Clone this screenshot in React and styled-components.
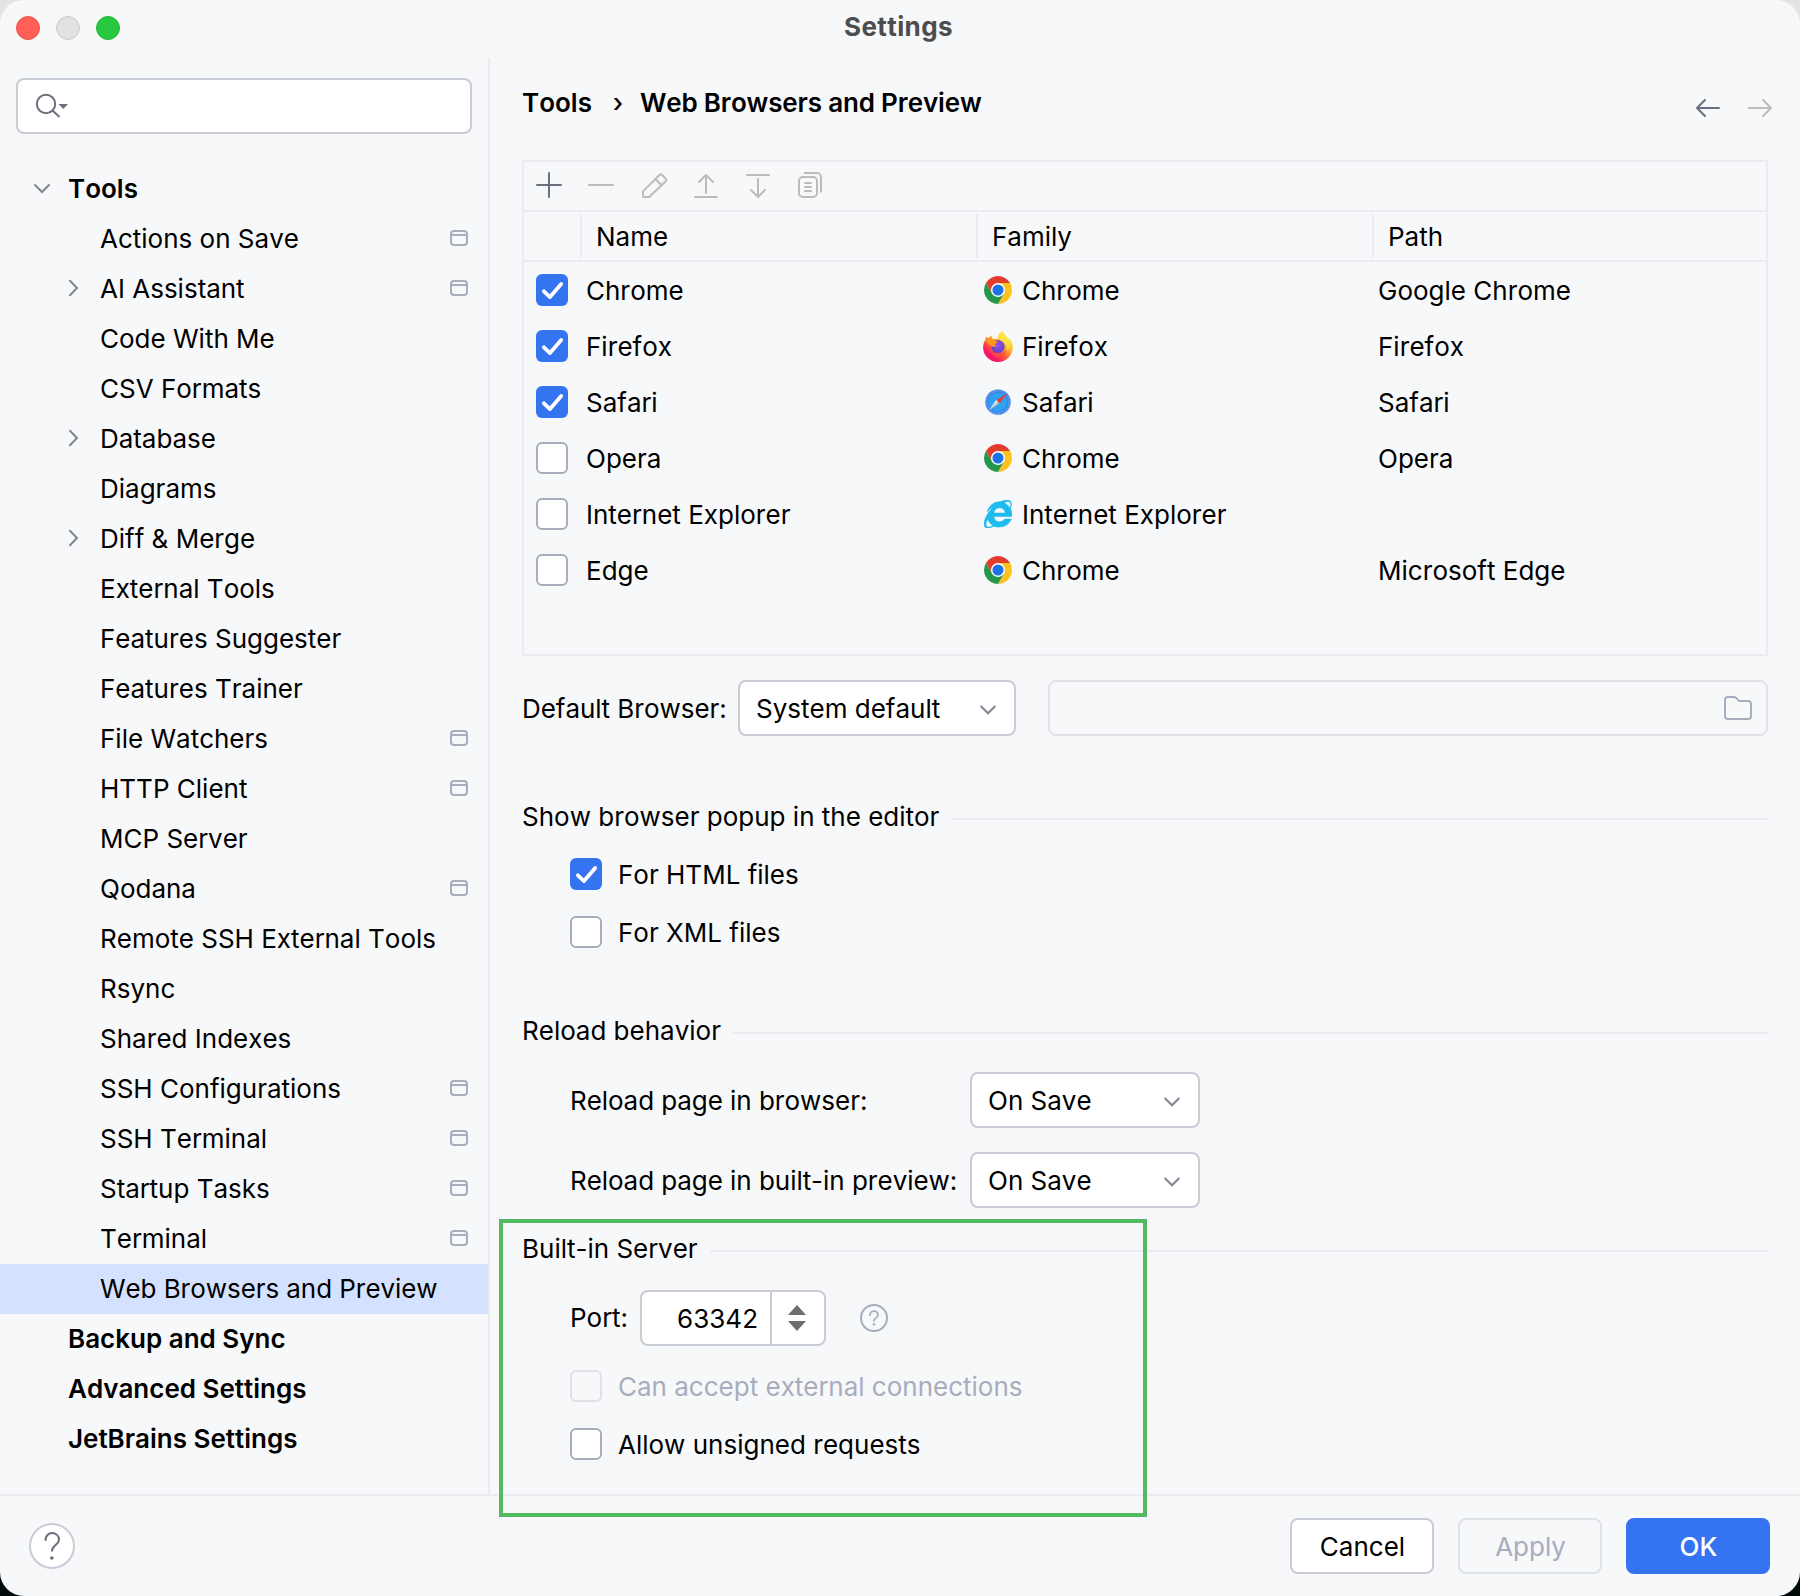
import React, { useState } from "react";
import styled, { createGlobalStyle, css } from "styled-components";
import { FaInternetExplorer } from "react-icons/fa";

const GlobalStyle = createGlobalStyle`
  * {
    box-sizing: border-box;
  }

  body {
    margin: 0;
    background: linear-gradient(#e4e4e4 50%, #02090a 50%);
    color: #000;
    font-family: Inter, "Liberation Sans", sans-serif;
    font-size: 26px;
    font-optical-sizing: none;
    font-kerning: none;
    line-height: 32px;
  }
`;

const Window = styled.div`
  position: relative;
  display: flex;
  flex-direction: column;
  width: 1800px;
  height: 1596px;
  overflow: hidden;
  background: #f7f8fa;
  border-radius: 24px;
`;

const TitleBar = styled.header`
  display: grid;
  grid-template-columns: 1fr auto 1fr;
  align-items: center;
  height: 58px;
  padding: 0 19px 4px 16px;
`;

const Lights = styled.div`
  display: flex;
  gap: 16px;
  padding-top: 2px;
`;

const Light = styled.span`
  width: 24px;
  height: 24px;
  border: 1px solid ${(props) => props.$edge};
  border-radius: 50%;
  background: ${(props) => props.$color};
`;

const WindowTitle = styled.h1`
  margin: 0;
  color: #4c4d4e;
  font-size: 26px;
  font-weight: 700;
  letter-spacing: 0.4px;
`;

const Body = styled.div`
  display: flex;
  height: 1436px;
`;

const Sidebar = styled.aside`
  width: 490px;
  padding-top: 20px;
  border-right: 2px solid #ebecf0;
`;

const SearchField = styled.div`
  display: flex;
  align-items: center;
  width: 456px;
  height: 56px;
  margin-left: 16px;
  padding-left: 16px;
  border: 2px solid #c9ccd6;
  border-radius: 8px;
  background: #fff;
`;

const Tree = styled.div`
  display: flex;
  flex-direction: column;
  margin-top: 30px;
`;

const TreeRow = styled.div`
  display: flex;
  align-items: center;
  height: 50px;
  padding: 0 20px 0 ${(props) => (props.$top ? 26 : 58)}px;
  background: ${(props) => (props.$selected ? "#d4e2ff" : "transparent")};
  font-weight: ${(props) => (props.$top ? 600 : 400)};
  letter-spacing: ${(props) => (props.$selected ? "-0.08px" : "normal")};
`;

const Arrow = styled.span`
  display: flex;
  width: 42px;
`;

const TreeLabel = styled.span`
  flex: 1;
  white-space: nowrap;
`;

const Content = styled.main`
  flex: 1;
  padding: 0 32px;
`;

const ContentHeader = styled.div`
  display: flex;
  align-items: flex-start;
  justify-content: space-between;
  height: 102px;
`;

const Breadcrumb = styled.div`
  display: flex;
  padding-top: 29px;
  font-weight: 600;
`;

const Divider = styled.span`
  width: 48px;
  padding-left: 4px;
  font-weight: 500;
  text-align: center;
`;

const CurrentPage = styled.span`
  letter-spacing: -0.18px;
`;

const History = styled.div`
  display: flex;
  gap: 20px;
  padding-top: 34px;
  margin-right: -8px;
`;

const Table = styled.div`
  height: 496px;
  border: 2px solid #ebecf0;
`;

const Toolbar = styled.div`
  display: flex;
  align-items: center;
  gap: 20px;
  height: 50px;
  padding-left: 10px;
  border-bottom: 2px solid #ebecf0;
`;

const columns = css`
  display: grid;
  grid-template-columns: 58px 396px 396px 1fr;
  align-items: center;
`;

const TableHead = styled.div`
  ${columns}
  height: 50px;
  border-bottom: 2px solid #ebecf0;
`;

const HeadCell = styled.div`
  height: 44px;
  margin-left: -2px;
  padding-left: 14px;
  border-left: 2px solid #ebecf0;
  line-height: 46px;

  &:first-child {
    border-left-color: transparent;
  }
`;

const TableRow = styled.div`
  ${columns}
  height: 56px;
`;

const Cell = styled.div`
  display: flex;
  align-items: center;
  gap: 8px;
  padding-left: ${(props) => props.$indent || 4}px;
`;

// Label next to a control sits one pixel under the middle
const Text = styled.span`
  padding-top: 2px;
  white-space: nowrap;
`;

const Checkbox = styled.button`
  display: flex;
  flex-shrink: 0;
  width: 32px;
  height: 32px;
  padding: 0;
  border: ${(props) => (props.$checked ? "0" : "2px solid #a8adbd")};
  border-radius: 6px;
  background: ${(props) => (props.$checked ? "#3574f0" : "#fff")};

  &:disabled {
    border-color: #dfe1e5;
    background: #f7f8fa;
  }
`;

const CheckRow = styled.label`
  display: flex;
  align-items: center;
  gap: 16px;
  height: 32px;
  margin: ${(props) => props.$top || 26}px 0 0 48px;
  color: ${(props) => (props.$disabled ? "#a8adbd" : "#000")};
`;

const FieldRow = styled.div`
  display: flex;
  align-items: center;
  height: 56px;
  margin: ${(props) => props.$top}px 0 0 ${(props) => props.$indent || 0}px;
`;

const FieldLabel = styled(Text)`
  width: ${(props) => props.$width}px;
  letter-spacing: -0.04px;
`;

const PortLabel = styled.span`
  width: 70px;
`;

const Select = styled.button`
  display: flex;
  align-items: center;
  justify-content: space-between;
  width: ${(props) => props.$width}px;
  height: 56px;
  padding: 0 18px 0 16px;
  border: 2px solid #c9ccd6;
  border-radius: 8px;
  background: #fff;
  color: #000;
  font: inherit;
  font-kerning: none;

  svg {
    margin-top: 4px;
  }
`;

const PathField = styled.div`
  display: flex;
  align-items: center;
  justify-content: flex-end;
  flex: 1;
  height: 56px;
  margin-left: 32px;
  padding-right: 13px;
  border: 2px solid #dfe1e5;
  border-radius: 8px;
`;

const SectionTitle = styled.div`
  display: flex;
  align-items: center;
  gap: 12px;
  height: 32px;
  margin-top: ${(props) => props.$top}px;

  &::after {
    content: "";
    flex: 1;
    height: 2px;
    margin-top: 4px;
    background: #ebecf0;
  }
`;

const Spinner = styled.div`
  display: flex;
  width: 186px;
  height: 56px;
  margin-right: 33px;
  border: 2px solid #c9ccd6;
  border-radius: 8px;
  background: #fff;
`;

const SpinnerValue = styled.span`
  width: 128px;
  padding: 2px 12px 0 0;
  line-height: 50px;
  text-align: right;
`;

const SpinnerButtons = styled.span`
  display: flex;
  align-items: center;
  justify-content: center;
  flex: 1;
  padding-right: 2px;
  border-left: 2px solid #c9ccd6;
`;

const Highlight = styled.div`
  position: absolute;
  top: 1219px;
  left: 499px;
  width: 648px;
  height: 298px;
  border: 4px solid #51ba62;
`;

const Footer = styled.footer`
  display: flex;
  align-items: center;
  gap: 24px;
  height: 102px;
  padding: 0 30px 0 29px;
  border-top: 2px solid #ebecf0;
`;

const HelpButton = styled.button`
  display: flex;
  width: 46px;
  height: 46px;
  margin-right: auto;
  padding: 0;
  border: 0;
  background: none;
`;

const Button = styled.button`
  width: 144px;
  height: 56px;
  padding: 2px 0 0 1px;
  border: 2px solid #c9ccd6;
  border-radius: 8px;
  background: #fff;
  color: #000;
  font: inherit;
  font-kerning: none;

  &:disabled {
    border-color: #dfe1e8;
    background: none;
    color: #a8adbd;
  }

  ${(props) =>
    props.$primary &&
    css`
      border-color: #3574f0;
      background: #3574f0;
      color: #fff;
      font-weight: 500;
    `}
`;

// 16-unit grid drawn at double size, as on a retina display
const Icon = ({ color = "#bcbcbc", size = 32, children }) => (
  <svg
    width={size}
    height={size}
    viewBox={`0 0 ${size / 2} ${size / 2}`}
    fill="none"
    stroke={color}
    strokeLinecap="round"
    strokeLinejoin="round"
  >
    {children}
  </svg>
);

const ChevronDown = () => (
  <svg width="16" height="10" fill="none" stroke="#818594" strokeWidth="2">
    <path d="M1.200 1.500L8 8.300l6.800-6.800" strokeLinecap="round" />
  </svg>
);

const TreeChevron = ({ open }) =>
  open ? (
    <svg width="32" height="32" fill="none" stroke="#818594" strokeWidth="2">
      <path d="M9 12l7 7 7-7" strokeLinecap="round" />
    </svg>
  ) : (
    <svg width="32" height="32" fill="none" stroke="#818594" strokeWidth="2">
      <path d="M12 7.800l7 7.200-7 7.200" strokeLinecap="round" />
    </svg>
  );

const ProjectIcon = () => (
  <svg width="18" height="18" fill="none" stroke="#a8adbd" strokeWidth="2">
    <rect x="1" y="1" width="16" height="14" rx="3" />
    <path d="M1 5h16" />
  </svg>
);

const SearchIcon = () => (
  <svg width="36" height="30" fill="none" stroke="#6c707e" strokeWidth="2">
    <circle cx="12" cy="13" r="9.200" />
    <path d="M18.500 19.500l7 6.500" />
    <path d="M24.500 13h9.500l-4.700 5z" fill="#6c707e" stroke="none" />
  </svg>
);

const Check = () => (
  <svg width="32" height="32" fill="none" stroke="#fff" strokeWidth="3.800">
    <path
      d="M7.900 17.300l6.100 5.800L25.200 10"
      strokeLinecap="round"
      strokeLinejoin="round"
    />
  </svg>
);

const FolderIcon = () => (
  <svg width="30" height="26" fill="none" stroke="#a8adbd" strokeWidth="2">
    <path d="M2 5a3 3 0 0 1 3-3h6a3 3 0 0 1 2.100.9L15.500 5.400a2 2 0 0 0 1.500.6H25a3 3 0 0 1 3 3v12a3 3 0 0 1-3 3H5a3 3 0 0 1-3-3z" />
  </svg>
);

const ChromeIcon = () => (
  <svg width="28" height="28" viewBox="0 0 48 48">
    <circle cx="24" cy="24" r="12" fill="#fff" />
    <path
      fill="#e33b2e"
      d="M24 12h20.780a24 24 0 0 0-41.560 0L13.610 30A12 12 0 0 1 24 12z"
    />
    <path
      fill="#fcc31e"
      d="M34.390 30L24 48a24 24 0 0 0 20.780-36H24a12 12 0 0 1 10.390 18z"
    />
    <path
      fill="#279847"
      d="M13.610 30L3.220 12A24 24 0 0 0 24 48l10.390-18a12 12 0 0 1-20.780 0z"
    />
    <circle cx="24" cy="24" r="9.500" fill="#1a73e8" />
  </svg>
);

const FirefoxIcon = () => (
  <svg width="30" height="31" viewBox="0 0 30 31">
    <defs>
      <linearGradient id="fxBody" x1="0.85" y1="0.1" x2="0.2" y2="0.95">
        <stop offset="0.05" stopColor="#fff04a" />
        <stop offset="0.35" stopColor="#ffb52e" />
        <stop offset="0.6" stopColor="#ff5b36" />
        <stop offset="0.85" stopColor="#f5156c" />
      </linearGradient>
      <radialGradient id="fxGlobe" cx="0.5" cy="0.4" r="0.6">
        <stop offset="0" stopColor="#9a4cf5" />
        <stop offset="1" stopColor="#5b45c4" />
      </radialGradient>
    </defs>
    <path
      fill="url(#fxBody)"
      d="M19.500 0c.8 3 3.500 4.500 5.300 7 .6.800 1 1.600 1.200 2.300.300-.5.300-1.300.200-2 2.300 2.700 3.600 5.800 3.600 9.300A14.800 14.400 0 0 1 .1 16.500c0-3.300 1-5.800 2.400-7.800 0-1.300.5-2.600 1.300-3.500.1 1 .5 1.600 1 2.200C6 6.200 7.800 5 9.500 4.700 9 5.600 8.900 6.500 9 7.700h6c-.2-3.500 1.500-6 4.500-7.700z"
    />
    <circle cx="15" cy="15.500" r="6.600" fill="url(#fxGlobe)" />
    <path
      fill="#ffe24a"
      d="M19.500 0c.8 3 3.500 4.500 5.300 7 2.800 3.700 2.600 9.500-.8 13.500.5-3 .2-6-1.800-7.800-2.300-2.200-5.700-2.700-6.700-6.200-.3-2.700 1.500-5.300 4-6.500z"
      opacity="0.8"
    />
    <path
      fill="#ff981f"
      d="M2.500 9.500C4 7.700 6.500 7 9 7.800c1.200 1.700 2.500 2.600 5.800 2.700-.1 1.300-1.300 2-3 2.500-.3 1.200.5 1.700 2.200 1.500-1 1.500-3.600 1.400-5.200.8-2-.8-5.300-3.300-6.300-5.800z"
    />
    <path
      fill="#ff4b3e"
      d="M7.500 13.500c-.5 5 2.700 8.900 7.500 9.300 3 .2 5.800-1.300 7.500-3.800.3 4-3 7-7.500 7-5.500 0-9.500-6.500-7.500-12.500z"
      opacity="0.85"
    />
  </svg>
);

const SafariIcon = () => (
  <svg width="28" height="28" viewBox="0 0 28 28">
    <circle cx="14" cy="14.400" r="13" fill="#d5d9df" />
    <circle cx="14" cy="14" r="12.600" fill="#3b87ea" />
    <circle cx="14" cy="14" r="9" fill="#2ea3f0" />
    <circle
      cx="14"
      cy="14"
      r="11.200"
      fill="none"
      stroke="#8fbdf5"
      strokeWidth="1.200"
      strokeDasharray="0.7 1.500"
    />
    <path fill="#e8403a" d="M23.500 5.500L12.200 12l3.400 3.600z" />
    <path fill="#f1f1f1" d="M4.800 22.500L12.200 12l1.700 1.800z" />
    <path fill="#b9bcc2" d="M4.800 22.500l9.100-8.700 1.700 1.800z" />
  </svg>
);

const HelpIcon = () => (
  <svg width="30" height="30" fill="none" stroke="#a8adbd" strokeWidth="2">
    <circle cx="15" cy="15" r="13" />
    <path
      d="M11 12.200c0-2.400 1.800-4 4-4s4 1.600 4 3.700c0 2.900-4 3.100-4 6"
      strokeWidth="1.800"
      strokeLinecap="round"
    />
    <circle cx="15" cy="21.300" r="1.300" fill="#a8adbd" stroke="none" />
  </svg>
);

const ExplorerIcon = styled(FaInternetExplorer)`
  width: 28px;
  height: 28px;
  margin-bottom: 1px;
  color: #1ebbee;
  stroke: #1ebbee;
  stroke-width: 10px;
`;

const familyIcons = {
  Chrome: <ChromeIcon />,
  Firefox: <FirefoxIcon />,
  Safari: <SafariIcon />,
  "Internet Explorer": <ExplorerIcon />,
};

const IconSlot = styled.span`
  display: flex;
  justify-content: center;
  width: 30px;
  margin-right: 1px;
`;

const tree = [
  { label: "Tools", top: true, arrow: "open" },
  { label: "Actions on Save", project: true },
  { label: "AI Assistant", arrow: "closed", project: true },
  { label: "Code With Me" },
  { label: "CSV Formats" },
  { label: "Database", arrow: "closed" },
  { label: "Diagrams" },
  { label: "Diff & Merge", arrow: "closed" },
  { label: "External Tools" },
  { label: "Features Suggester" },
  { label: "Features Trainer" },
  { label: "File Watchers", project: true },
  { label: "HTTP Client", project: true },
  { label: "MCP Server" },
  { label: "Qodana", project: true },
  { label: "Remote SSH External Tools" },
  { label: "Rsync" },
  { label: "Shared Indexes" },
  { label: "SSH Configurations", project: true },
  { label: "SSH Terminal", project: true },
  { label: "Startup Tasks", project: true },
  { label: "Terminal", project: true },
  { label: "Web Browsers and Preview" },
  { label: "Backup and Sync", top: true },
  { label: "Advanced Settings", top: true },
  { label: "JetBrains Settings", top: true },
];

const initialBrowsers = [
  { name: "Chrome", family: "Chrome", path: "Google Chrome", active: true },
  { name: "Firefox", family: "Firefox", path: "Firefox", active: true },
  { name: "Safari", family: "Safari", path: "Safari", active: true },
  { name: "Opera", family: "Chrome", path: "Opera", active: false },
  {
    name: "Internet Explorer",
    family: "Internet Explorer",
    path: "",
    active: false,
  },
  { name: "Edge", family: "Chrome", path: "Microsoft Edge", active: false },
];

const CheckMark = ({ checked, ...rest }) => (
  <Checkbox $checked={checked} {...rest}>
    {checked && <Check />}
  </Checkbox>
);

export default function App() {
  const [selected, setSelected] = useState("Web Browsers and Preview");
  const [browsers, setBrowsers] = useState(initialBrowsers);
  const [html, setHtml] = useState(true);
  const [xml, setXml] = useState(false);
  const [unsigned, setUnsigned] = useState(false);

  const toggleBrowser = (index) => {
    setBrowsers(
      browsers.map((b, i) => (i === index ? { ...b, active: !b.active } : b))
    );
  };

  return (
    <>
      <GlobalStyle />
      <Window>
        <TitleBar>
          <Lights>
            <Light $color="#ff5f57" $edge="#e9524a" />
            <Light $color="#e1e1e1" $edge="#c9c9c9" />
            <Light $color="#28c840" $edge="#24b33a" />
          </Lights>
          <WindowTitle>Settings</WindowTitle>
        </TitleBar>
        <Body>
          <Sidebar>
            <SearchField>
              <SearchIcon />
            </SearchField>
            <Tree>
              {tree.map((item) => (
                <TreeRow
                  key={item.label}
                  $top={item.top}
                  $selected={item.label === selected}
                  onClick={() => setSelected(item.label)}
                >
                  <Arrow>
                    {item.arrow && <TreeChevron open={item.arrow === "open"} />}
                  </Arrow>
                  <TreeLabel>{item.label}</TreeLabel>
                  {item.project && <ProjectIcon />}
                </TreeRow>
              ))}
            </Tree>
          </Sidebar>
          <Content>
            <ContentHeader>
              <Breadcrumb>
                <span>Tools</span>
                <Divider>›</Divider>
                <CurrentPage>Web Browsers and Preview</CurrentPage>
              </Breadcrumb>
              <History>
                <Icon color="#6c707e">
                  <path d="M2.500 8H13.500M6.500 4l-4 4 4 4" />
                </Icon>
                <Icon>
                  <path d="M2.500 8H13.500M9.500 4l4 4-4 4" />
                </Icon>
              </History>
            </ContentHeader>
            <Table>
              <Toolbar>
                <Icon color="#6c707e">
                  <path d="M7.500 1.500v12M1.500 7.500h12" />
                </Icon>
                <Icon>
                  <path d="M1.500 7.500h12" />
                </Icon>
                <Icon>
                  <path d="M2.500 13.500v-2.800l8.100-8.100a1.100 1.100 0 0 1 1.550 0l1.600 1.600a1.100 1.100 0 0 1 0 1.550L5.600 13.500zM8.700 4.500l3.100 3.100" />
                </Icon>
                <Icon>
                  <path d="M2.500 13.500h11M8 11.500V2.700M4.500 6L8 2.500 11.500 6" />
                </Icon>
                <Icon>
                  <path d="M2.500 2.500h11M8 4.500v8.800M4.500 10L8 13.500l3.500-3.500" />
                </Icon>
                <Icon>
                  <rect x="2.500" y="3.500" width="9" height="10" rx="2" />
                  <path d="M5.300 1.500h6.200a2 2 0 0 1 2 2v6.500q0 .5-.2.900M5.500 6.500h3M5.500 8.500h3M5.500 10.500h3" />
                </Icon>
              </Toolbar>
              <TableHead>
                <HeadCell />
                <HeadCell>Name</HeadCell>
                <HeadCell>Family</HeadCell>
                <HeadCell>Path</HeadCell>
              </TableHead>
              {browsers.map((browser, index) => (
                <TableRow key={browser.name}>
                  <Cell $indent={12}>
                    <CheckMark
                      checked={browser.active}
                      onClick={() => toggleBrowser(index)}
                    />
                  </Cell>
                  <Cell>
                    <Text>{browser.name}</Text>
                  </Cell>
                  <Cell $indent={5}>
                    <IconSlot>{familyIcons[browser.family]}</IconSlot>
                    <Text>{browser.family}</Text>
                  </Cell>
                  <Cell>
                    <Text>{browser.path}</Text>
                  </Cell>
                </TableRow>
              ))}
            </Table>
            <FieldRow $top={24}>
              <FieldLabel $width={216}>Default Browser:</FieldLabel>
              <Select $width={278}>
                <Text>System default</Text>
                <ChevronDown />
              </Select>
              <PathField>
                <FolderIcon />
              </PathField>
            </FieldRow>
            <SectionTitle $top={65}>Show browser popup in the editor</SectionTitle>
            <CheckRow $top={25}>
              <CheckMark checked={html} onClick={() => setHtml(!html)} />
              <Text>For HTML files</Text>
            </CheckRow>
            <CheckRow>
              <CheckMark checked={xml} onClick={() => setXml(!xml)} />
              <Text>For XML files</Text>
            </CheckRow>
            <SectionTitle $top={67}>Reload behavior</SectionTitle>
            <FieldRow $top={25} $indent={48}>
              <FieldLabel $width={400}>Reload page in browser:</FieldLabel>
              <Select $width={230}>
                <Text>On Save</Text>
                <ChevronDown />
              </Select>
            </FieldRow>
            <FieldRow $top={24} $indent={48}>
              <FieldLabel $width={400}>
                Reload page in built-in preview:
              </FieldLabel>
              <Select $width={230}>
                <Text>On Save</Text>
                <ChevronDown />
              </Select>
            </FieldRow>
            <SectionTitle $top={25}>Built-in Server</SectionTitle>
            <FieldRow $top={25} $indent={48}>
              <PortLabel>Port:</PortLabel>
              <Spinner>
                <SpinnerValue>63342</SpinnerValue>
                <SpinnerButtons>
                  <svg width="20" height="28" fill="#6e6e6e">
                    <path d="M1 11L10 1l9 10zM1 17h18l-9 10z" />
                  </svg>
                </SpinnerButtons>
              </Spinner>
              <HelpIcon />
            </FieldRow>
            <CheckRow $top={24} $disabled>
              <CheckMark checked={false} disabled />
              <Text>Can accept external connections</Text>
            </CheckRow>
            <CheckRow>
              <CheckMark
                checked={unsigned}
                onClick={() => setUnsigned(!unsigned)}
              />
              <Text>Allow unsigned requests</Text>
            </CheckRow>
          </Content>
        </Body>
        <Footer>
          <HelpButton aria-label="Help">
            <svg width="46" height="46" fill="none" strokeWidth="2">
              <circle cx="23" cy="23" r="22" fill="#fff" stroke="#c9ccd6" />
              <path
                d="M16.500 17c0-4 2.900-7 6.700-7s6.800 2.800 6.800 6.500c0 5.200-7 5.800-7 11.300"
                stroke="#6c707e"
                strokeLinecap="round"
              />
              <circle cx="22.800" cy="35" r="1.800" fill="#6c707e" />
            </svg>
          </HelpButton>
          <Button>Cancel</Button>
          <Button disabled>Apply</Button>
          <Button $primary>OK</Button>
        </Footer>
        <Highlight />
      </Window>
    </>
  );
}
